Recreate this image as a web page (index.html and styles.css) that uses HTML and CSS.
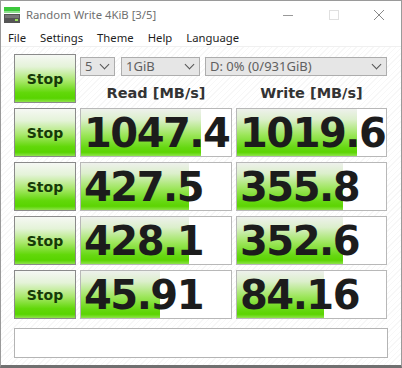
FILE: index.html
```html
<!DOCTYPE html>
<html lang="en">
<head>
  <meta charset="UTF-8" />
  <meta name="viewport" content="width=device-width, initial-scale=1" />
  <title>Random Write 4KiB [3/5]</title>
  <link rel="stylesheet" href="styles.css">
</head>
<body>
  <div class="window">
    <div class="titlebar">
      <svg class="app-icon" width="16" height="16" viewBox="0 0 16 16">
        <rect x="0" y="0" width="16" height="4" fill="#3cc83c" />
        <rect x="0" y="4" width="16" height="2" fill="#8ee08e" />
        <rect x="0" y="7" width="16" height="9" fill="#555" />
        <rect x="1" y="8" width="14" height="3" fill="#777" />
        <rect x="11" y="12" width="3" height="2" fill="#9be05a" />
      </svg>
      <span class="title">Random Write 4KiB [3/5]</span>
      <div class="controls">
        <svg width="12" height="12" viewBox="0 0 12 12"><path d="M1 6.5h10" stroke="#999" stroke-width="1" /></svg>
        <svg width="12" height="12" viewBox="0 0 12 12"><rect x="1.5" y="1.5" width="9" height="9" fill="none" stroke="#e0e0e0" /></svg>
        <svg width="12" height="12" viewBox="0 0 12 12"><path d="M1 1l10 10M11 1L1 11" stroke="#888" stroke-width="1" /></svg>
      </div>
    </div>
    <div class="menubar">
      <span>File</span>
      <span>Settings</span>
      <span>Theme</span>
      <span>Help</span>
      <span>Language</span>
    </div>
    <div class="content">
      <div class="grid">
        <button class="stop">Stop</button>
        <div class="top-right">
          <div class="selects">
            <div class="select sel-count">5<span class="chev"></span></div>
            <div class="select sel-size">1GiB<span class="chev"></span></div>
            <div class="select sel-drive">D: 0% (0/931GiB)<span class="chev"></span></div>
          </div>
          <div class="headers">
            <div class="head">Read [MB/s]</div>
            <div class="head">Write [MB/s]</div>
          </div>
        </div>

        <button class="stop">Stop</button>
        <div class="meter"><div class="fill" style="width: 120px"></div><span class="value">1047.4</span></div>
        <div class="meter"><div class="fill" style="width: 120px"></div><span class="value">1019.6</span></div>

        <button class="stop">Stop</button>
        <div class="meter"><div class="fill" style="width: 108px"></div><span class="value">427.5</span></div>
        <div class="meter"><div class="fill" style="width: 106px"></div><span class="value">355.8</span></div>

        <button class="stop">Stop</button>
        <div class="meter"><div class="fill" style="width: 108px"></div><span class="value">428.1</span></div>
        <div class="meter"><div class="fill" style="width: 106px"></div><span class="value">352.6</span></div>

        <button class="stop">Stop</button>
        <div class="meter"><div class="fill" style="width: 79px"></div><span class="value">45.91</span></div>
        <div class="meter"><div class="fill" style="width: 87px"></div><span class="value">84.16</span></div>
      </div>
      <div class="status"></div>
    </div>
  </div>
</body>
</html>
```

FILE: styles.css
```css
* { box-sizing: border-box; }
body { margin: 0; background: #fff; font-family: "Noto Sans", "DejaVu Sans", sans-serif; }
.window { width: 402px; height: 368px; border: 1px solid #9a9a9a; border-bottom: 3px solid #707070; display: flex; flex-direction: column; background: #fff; }
.titlebar { height: 27px; display: flex; align-items: center; padding-left: 3px; background: #fff; }
.app-icon { margin-right: 6px; }
.title { font-size: 11.3px; color: #707070; }
.controls { margin-left: auto; display: flex; gap: 33px; padding-right: 16px; }
.controls svg:first-child { margin-right: 1px; }
.menubar { height: 19px; display: flex; align-items: center; gap: 14px; padding-left: 7px; font-size: 11.3px; color: #1e1e1e; border-bottom: 1px solid #f0f0f0; }
.content { flex: 1; padding: 7px 0 0 13px; background: repeating-linear-gradient(135deg, #fff 0, #fff 3px, #f7f7f7 3px, #f7f7f7 4px); }
.grid { display: grid; grid-template-columns: 62px 152px 151px; grid-auto-rows: 49px; column-gap: 4px; row-gap: 5px; }
.stop { margin: 0; padding: 0; border: 1px solid #8a8a8a; font-family: "DejaVu Sans", sans-serif; font-weight: bold; font-size: 14px; color: #163a08;
  background: linear-gradient(#f6f8f4 0%, #e4f3d8 25%, #a8e86a 55%, #62d80a 80%, #58d400 92%, #8fe24c 100%); }
.top-right { grid-column: span 2; display: flex; flex-direction: column; padding-top: 3px; }
.selects { display: flex; gap: 5px; }
.select { height: 19px; border: 1px solid #adadad; background: #e6e6e6; color: #606060; font-size: 13px; line-height: 17px; padding-left: 4px; position: relative; }
.sel-count { width: 35px; margin-right: 1px; }
.sel-size { width: 79px; }
.sel-drive { width: 182px; }
.chev { position: absolute; right: 6px; top: 3px; width: 7px; height: 7px; border-right: 1px solid #555; border-bottom: 1px solid #555; transform: rotate(45deg); }
.headers { display: grid; grid-template-columns: 152px 151px; column-gap: 4px; margin-top: 9px; }
.head { text-align: center; font-family: "DejaVu Sans", sans-serif; font-weight: bold; font-size: 14.5px; color: #333; }
.meter { position: relative; border: 1px solid #b8b8b8; background: #fff; overflow: hidden; }
.fill { height: 100%; background: linear-gradient(#eef1ec 0%, #dcefcc 22%, #9ce65a 55%, #66d812 82%, #5cd402 92%, #8ee44a 100%); }
.value { position: absolute; left: 3px; top: 0; bottom: 0; display: flex; align-items: center; font-family: "DejaVu Sans", sans-serif; font-weight: bold; font-size: 40px; letter-spacing: -1.5px; color: #1c1c1c; }
.status { width: 374px; height: 30px; margin-top: 9px; border: 1px solid #b4b4b4; background: #fff; }
```
